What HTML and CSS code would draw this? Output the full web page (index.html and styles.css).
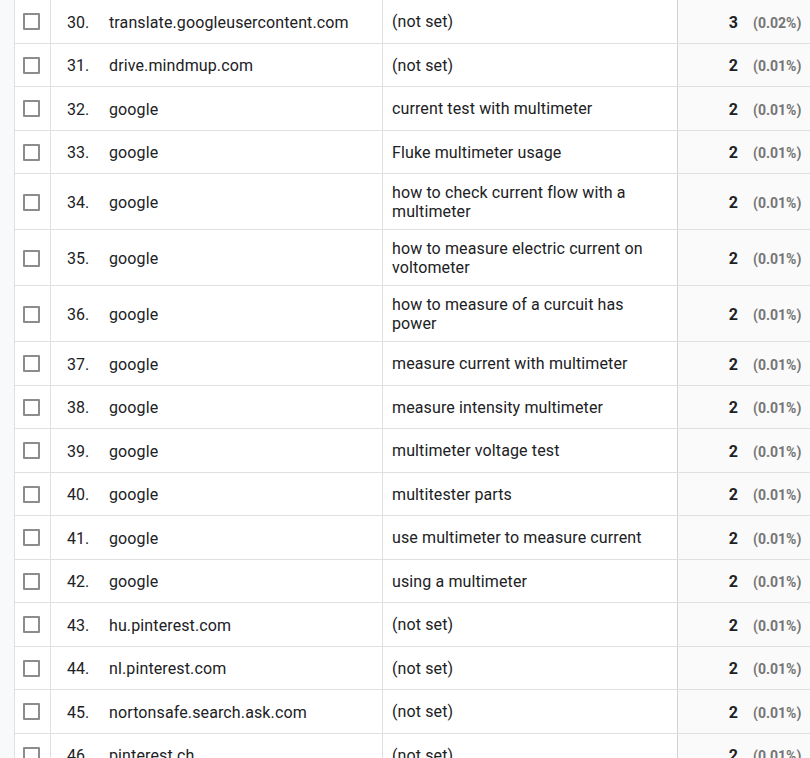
FILE: index.html
```html
<!DOCTYPE html>
<html>
<head>
<meta charset="utf-8">
<link rel="stylesheet" href="styles.css">
</head>
<body>
<div class="page">
  <div class="strip"></div>
  <div class="table">
    <div class="row"><div class="c-check"><span class="box"></span></div><div class="c-main"><span class="num">30.</span><span class="src">translate.googleusercontent.com</span></div><div class="c-kw">(not set)</div><div class="c-val"><span class="cnt">3</span><span class="pct">(0.02%)</span></div></div>
    <div class="row"><div class="c-check"><span class="box"></span></div><div class="c-main"><span class="num">31.</span><span class="src">drive.mindmup.com</span></div><div class="c-kw">(not set)</div><div class="c-val"><span class="cnt">2</span><span class="pct">(0.01%)</span></div></div>
    <div class="row"><div class="c-check"><span class="box"></span></div><div class="c-main"><span class="num">32.</span><span class="src">google</span></div><div class="c-kw">current test with multimeter</div><div class="c-val"><span class="cnt">2</span><span class="pct">(0.01%)</span></div></div>
    <div class="row"><div class="c-check"><span class="box"></span></div><div class="c-main"><span class="num">33.</span><span class="src">google</span></div><div class="c-kw">Fluke multimeter usage</div><div class="c-val"><span class="cnt">2</span><span class="pct">(0.01%)</span></div></div>
    <div class="row"><div class="c-check"><span class="box"></span></div><div class="c-main"><span class="num">34.</span><span class="src">google</span></div><div class="c-kw">how to check current flow with a multimeter</div><div class="c-val"><span class="cnt">2</span><span class="pct">(0.01%)</span></div></div>
    <div class="row"><div class="c-check"><span class="box"></span></div><div class="c-main"><span class="num">35.</span><span class="src">google</span></div><div class="c-kw">how to measure electric current on voltometer</div><div class="c-val"><span class="cnt">2</span><span class="pct">(0.01%)</span></div></div>
    <div class="row"><div class="c-check"><span class="box"></span></div><div class="c-main"><span class="num">36.</span><span class="src">google</span></div><div class="c-kw">how to measure of a curcuit has power</div><div class="c-val"><span class="cnt">2</span><span class="pct">(0.01%)</span></div></div>
    <div class="row"><div class="c-check"><span class="box"></span></div><div class="c-main"><span class="num">37.</span><span class="src">google</span></div><div class="c-kw">measure current with multimeter</div><div class="c-val"><span class="cnt">2</span><span class="pct">(0.01%)</span></div></div>
    <div class="row"><div class="c-check"><span class="box"></span></div><div class="c-main"><span class="num">38.</span><span class="src">google</span></div><div class="c-kw">measure intensity multimeter</div><div class="c-val"><span class="cnt">2</span><span class="pct">(0.01%)</span></div></div>
    <div class="row"><div class="c-check"><span class="box"></span></div><div class="c-main"><span class="num">39.</span><span class="src">google</span></div><div class="c-kw">multimeter voltage test</div><div class="c-val"><span class="cnt">2</span><span class="pct">(0.01%)</span></div></div>
    <div class="row"><div class="c-check"><span class="box"></span></div><div class="c-main"><span class="num">40.</span><span class="src">google</span></div><div class="c-kw">multitester parts</div><div class="c-val"><span class="cnt">2</span><span class="pct">(0.01%)</span></div></div>
    <div class="row"><div class="c-check"><span class="box"></span></div><div class="c-main"><span class="num">41.</span><span class="src">google</span></div><div class="c-kw">use multimeter to measure current</div><div class="c-val"><span class="cnt">2</span><span class="pct">(0.01%)</span></div></div>
    <div class="row"><div class="c-check"><span class="box"></span></div><div class="c-main"><span class="num">42.</span><span class="src">google</span></div><div class="c-kw">using a multimeter</div><div class="c-val"><span class="cnt">2</span><span class="pct">(0.01%)</span></div></div>
    <div class="row"><div class="c-check"><span class="box"></span></div><div class="c-main"><span class="num">43.</span><span class="src">hu.pinterest.com</span></div><div class="c-kw">(not set)</div><div class="c-val"><span class="cnt">2</span><span class="pct">(0.01%)</span></div></div>
    <div class="row"><div class="c-check"><span class="box"></span></div><div class="c-main"><span class="num">44.</span><span class="src">nl.pinterest.com</span></div><div class="c-kw">(not set)</div><div class="c-val"><span class="cnt">2</span><span class="pct">(0.01%)</span></div></div>
    <div class="row"><div class="c-check"><span class="box"></span></div><div class="c-main"><span class="num">45.</span><span class="src">nortonsafe.search.ask.com</span></div><div class="c-kw">(not set)</div><div class="c-val"><span class="cnt">2</span><span class="pct">(0.01%)</span></div></div>
    <div class="row"><div class="c-check"><span class="box"></span></div><div class="c-main"><span class="num">46.</span><span class="src">pinterest.ch</span></div><div class="c-kw">(not set)</div><div class="c-val"><span class="cnt">2</span><span class="pct">(0.01%)</span></div></div>
  </div>
</div>
</body>
</html>
```

FILE: styles.css
```css
html, body {
  margin: 0;
  padding: 0;
  background: #ffffff;
  overflow: hidden;
}

.page {
  display: flex;
  font-family: Roboto, "Liberation Sans", sans-serif;
  font-size: 16px;
  color: #202124;
  min-height: 758px;
}

.strip {
  width: 14px;
  flex: none;
  background: #f8f9fa;
  border-right: 1px solid #e0e0e0;
}

.table {
  flex: 1;
  display: flex;
  flex-direction: column;
}

.row {
  display: grid;
  grid-template-columns: 36px 332px 295px 1fr;
  min-height: 42.5px;
  border-bottom: 1px solid #e0e0e0;
  line-height: 18.5px;
}

.row > div {
  display: flex;
  align-items: center;
  padding-top: 3px;
}

.c-check {
  border-right: 1px solid #e0e0e0;
  padding-left: 8px;
}

.row > .c-check {
  padding-top: 1px;
}

.box {
  width: 13px;
  height: 13px;
  border: 2px solid #8c8c8c;
  border-radius: 1px;
  background: #fff;
}

.c-main {
  border-right: 1px solid #e0e0e0;
  padding-left: 16px;
  letter-spacing: 0.12px;
}

.num {
  width: 42px;
  flex: none;
  letter-spacing: 0;
}

.row > .c-kw {
  border-right: 1px solid #d2d2d2;
  padding: 10px 20px 8px 9px;
  letter-spacing: 0.12px;
}

.c-val {
  background: #fafafa;
  justify-content: flex-end;
}

.cnt {
  font-weight: 700;
}

.pct {
  width: 57px;
  margin-left: 15px;
  font-size: 14px;
  font-weight: 700;
  color: #757575;
}
```
